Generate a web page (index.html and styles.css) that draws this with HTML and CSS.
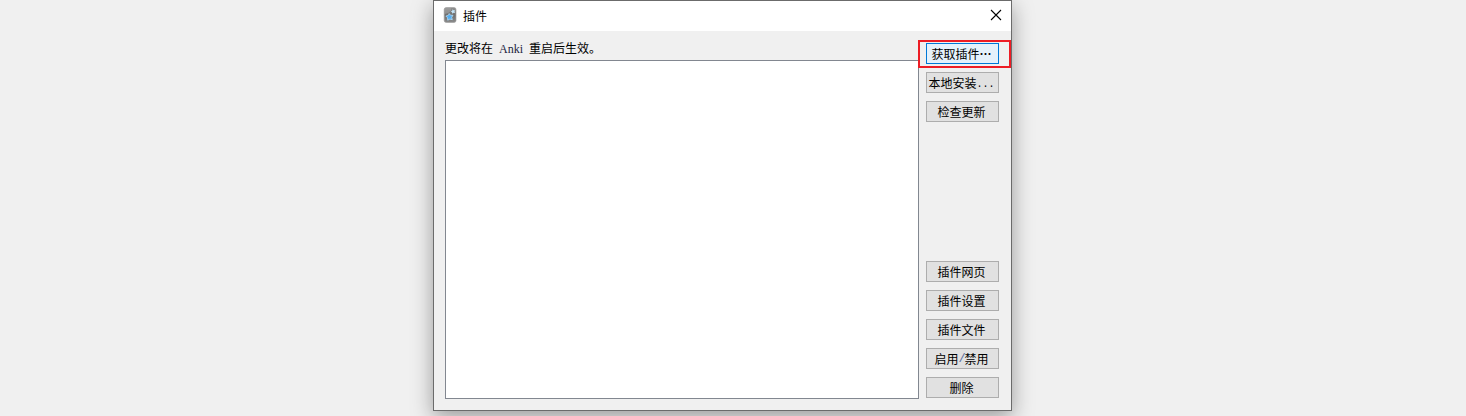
FILE: index.html
```html
<!DOCTYPE html>
<html lang="zh-CN">
<head>
<meta charset="utf-8">
<title>插件</title>
<link rel="stylesheet" href="styles.css">
</head>
<body>
<main class="window">
  <header class="titlebar">
    <svg class="app-icon" width="14" height="16" viewBox="0 0 14 16">
      <defs><linearGradient id="body" x1="0" y1="0" x2="0" y2="1"><stop offset="0" stop-color="#909090"/><stop offset=".5" stop-color="#6f6f6f"/><stop offset="1" stop-color="#8a8a8a"/></linearGradient></defs>
      <rect x="1.2" y=".6" width="11.8" height="14.8" rx="2" fill="url(#body)" stroke="#a0a0a0" stroke-width=".7"/>
      <path d="M1.5 7Q6 6.5 8 3.5V1H3.2Q1.5 1 1.5 3Z" fill="#a3a3a3" opacity=".6"/>
      <path d="M9.6 2.2l.9 1 1.5 0-.5 1.3.5 1.4-1.5-.1-1.2.9-.3-1.5-1.2-.8 1.4-.7z" fill="#c3e4f8"/>
      <path d="M6.2 6.6l1.3 1.6 2.5.1-1.3 2 .6 2.4-2.4-.6-2.2 1.1-.1-2.4-1.7-1.7 2.4-.7z" fill="#55aef0" stroke="#b5dcf6" stroke-width=".8"/>
    </svg>
    <h1 class="title">插件</h1>
    <svg class="close" width="12" height="12" viewBox="0 0 12 12"><path d="M1 1L11 11M11 1L1 11" stroke="#000" stroke-width="1.1"/></svg>
  </header>
  <div class="content">
    <section class="left">
      <p class="notice">更改将在<span class="latin">Anki</span>重启后生效。</p>
      <div class="list"></div>
    </section>
    <aside class="buttons">
      <button class="btn primary">获取插件<span class="ellipsis">⋯</span></button>
      <button class="btn">本地安装<span class="dots">...</span></button>
      <button class="btn">检查更新</button>
      <div class="spacer"></div>
      <button class="btn">插件网页</button>
      <button class="btn">插件设置</button>
      <button class="btn">插件文件</button>
      <button class="btn">启用<span class="slash">/</span>禁用</button>
      <button class="btn">删除</button>
      <div class="highlight"></div>
    </aside>
  </div>
</main>
</body>
</html>
```
FILE: styles.css
```css
* { box-sizing: border-box; }
body {
  margin: 0;
  height: 416px;
  overflow: hidden;
  background: #f0f0f0;
  color: #000;
  font: 12px/14px "Noto Sans CJK SC", sans-serif;
}
.window {
  display: flex;
  flex-direction: column;
  width: 579px;
  height: 411px;
  margin-left: 433px;
  border: 1px solid #6b6b6b;
  background: #f0f0f0;
  box-shadow: 0 6px 20px rgba(0, 0, 0, .36);
}
.titlebar {
  display: flex;
  align-items: center;
  height: 30px;
  padding: 0 9px;
  background: #fff;
}
.app-icon { margin-top: -2px; }
.title {
  flex: 1;
  margin: 0 0 0 6px;
  font-size: 12px;
  font-weight: 400;
}
.close { margin-top: -2px; }
.content {
  display: flex;
  flex: 1;
  gap: 7px;
  padding: 9px 12px 11px 11px;
}
.left {
  display: flex;
  flex-direction: column;
  width: 474px;
}
.notice {
  height: 20px;
  margin: 0;
  line-height: 15px;
  white-space: nowrap;
}
.latin {
  margin: 0 6px;
  font: 12px/14px "Liberation Serif", serif;
  color: #1c2440;
}
.list {
  flex: 1;
  border: 1px solid #828790;
  background: #fff;
}
.buttons {
  position: relative;
  display: flex;
  flex-direction: column;
  gap: 8px;
  width: 73px;
  padding: 3px 0 1px;
}
.btn {
  display: flex;
  align-items: center;
  justify-content: center;
  height: 21px;
  padding: 1px 2px 0 0;
  border: 1px solid #adadad;
  background: #e1e1e1;
  color: #000;
  font: inherit;
  white-space: nowrap;
}
.primary {
  border-color: #0078d7;
  background: #e5f1fb;
}
.ellipsis {
  width: 12px;
  font-weight: 700;
}
.dots {
  padding-top: 3px;
  font: 10px/14px "Liberation Mono", monospace;
}
.slash {
  width: 6px;
  text-align: center;
  font: 12px/14px "Liberation Mono", monospace;
  color: #596b9a;
}
.spacer { flex: 1; }
/* Callout frame around the first action */
.highlight {
  position: absolute;
  top: 0;
  left: -8px;
  width: 93px;
  height: 28px;
  border: 2px solid #ed1c24;
}
```
